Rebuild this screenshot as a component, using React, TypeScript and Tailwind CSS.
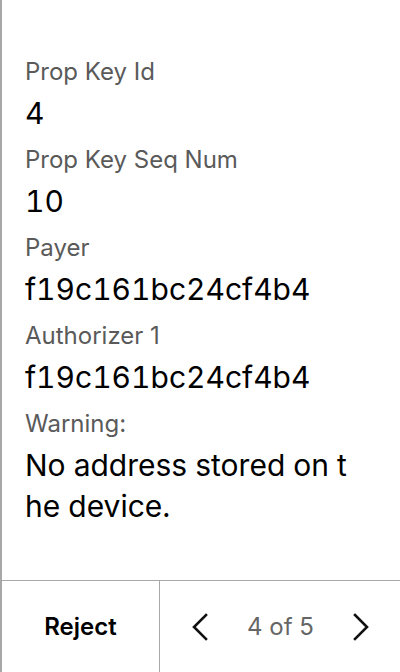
import React from "react";

const fields = [
  { label: "Prop Key Id", value: "4" },
  { label: "Prop Key Seq Num", value: "10" },
  { label: "Payer", value: "f19c161bc24cf4b4" },
  { label: "Authorizer 1", value: "f19c161bc24cf4b4" },
  { label: "Warning:", value: "No address stored on the device." },
];

const Chevron = ({ dir }: { dir: "left" | "right" }) => (
  <svg width="16" height="28" viewBox="0 0 16 28" fill="none" stroke="#111" strokeWidth="2.6" strokeLinecap="square">
    {dir === "left" ? <polyline points="14,2 2,14 14,26" /> : <polyline points="2,2 14,14 2,26" />}
  </svg>
);

export default function App() {
  return (
    <div className="w-[400px] h-[672px] bg-white flex flex-col border-l-2 border-[#a8a8a8] font-['Inter',sans-serif] overflow-hidden">
      <div className="flex-1 pt-[58px] pl-[23px] pr-[40px]">
        {fields.map((f) => (
          <div key={f.label} className="mb-[12px]">
            <div className="text-[24px] leading-[28px] text-[#5a5a5a] mb-[7px]">{f.label}</div>
            <div className="text-[30px] leading-[41px] text-black break-all tabular-nums">{f.value}</div>
          </div>
        ))}
      </div>
      <div className="h-[92px] flex border-t border-[#a8a8a8]">
        <button className="w-[158px] flex items-center justify-center text-[24px] font-semibold text-black border-r border-[#a8a8a8]">
          Reject
        </button>
        <div className="flex-1 flex items-center justify-between pl-[32px] pr-[31px]">
          <Chevron dir="left" />
          <span className="text-[24px] text-[#666]">4 of 5</span>
          <Chevron dir="right" />
        </div>
      </div>
    </div>
  );
}
